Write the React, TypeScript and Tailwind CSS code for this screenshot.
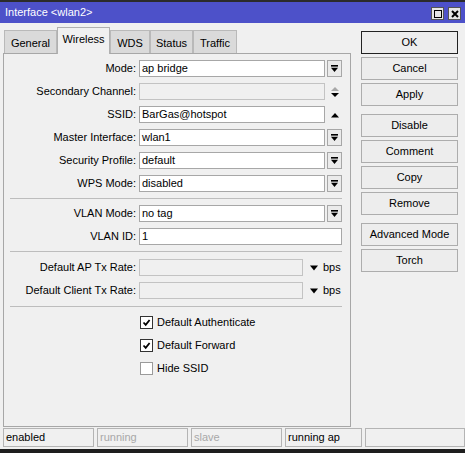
import React from "react";

const font = "font-['Liberation_Sans',Arial,sans-serif]";

function DropIcon() {
  return (
    <svg width="9" height="8" viewBox="0 0 9 8">
      <rect x="1" y="0" width="7" height="1.6" fill="#000" />
      <path d="M1 2.8 L8 2.8 L4.5 7 Z" fill="#000" />
    </svg>
  );
}

function DropButton() {
  return (
    <div className="ml-[2px] flex h-[17px] w-[15px] items-center justify-center border border-[#a7a7a7] bg-[#ebebeb]">
      <DropIcon />
    </div>
  );
}

function Field({
  value,
  width,
  disabled,
}: {
  value?: string;
  width: string;
  disabled?: boolean;
}) {
  return (
    <div
      className={`flex h-[17px] items-center border px-[2px] ${width} ${
        disabled ? "border-[#c3c3c3] bg-[#f0f0f0]" : "border-[#a7a7a7] bg-white"
      }`}
    >
      {value}
    </div>
  );
}

function Row({ label, children }: { label: string; children: React.ReactNode }) {
  return (
    <div className="flex h-[23px] items-center">
      <div className="w-[132px] shrink-0 text-right">{label}</div>
      <div className="ml-[3px] flex items-center">{children}</div>
    </div>
  );
}

function Separator({ top, bottom }: { top: string; bottom: string }) {
  return <div className={`ml-[6px] w-[332px] border-t border-[#bdbdbd] ${top} ${bottom}`} />;
}

function Check({ label, checked }: { label: string; checked: boolean }) {
  return (
    <div className="flex h-[23px] items-center pl-[136px]">
      <div
        className={`flex h-[13px] w-[13px] items-center justify-center border bg-white ${
          checked ? "border-[#333]" : "border-[#9a9a9a]"
        }`}
      >
        {checked && (
          <svg width="9" height="9" viewBox="0 0 9 9">
            <path d="M1.5 4.5 L3.7 6.8 L7.6 2" stroke="#000" strokeWidth="1.8" fill="none" />
          </svg>
        )}
      </div>
      <span className="ml-[4px]">{label}</span>
    </div>
  );
}

const tabs = [
  { name: "General", w: "w-[53px]" },
  { name: "Wireless", w: "w-[53px]", active: true },
  { name: "WDS", w: "w-[40px]" },
  { name: "Status", w: "w-[43px]" },
  { name: "Traffic", w: "w-[44px]" },
];

const buttons = [
  { name: "OK", gap: false, primary: true },
  { name: "Cancel" },
  { name: "Apply" },
  { name: "Disable", gap: true },
  { name: "Comment" },
  { name: "Copy" },
  { name: "Remove" },
  { name: "Advanced Mode", gap: true },
  { name: "Torch" },
];

const status = [
  { text: "enabled", w: "w-[91px]" },
  { text: "running", w: "w-[91px]", dim: true },
  { text: "slave", w: "w-[91px]", dim: true },
  { text: "running ap", w: "w-[77px]" },
  { text: "", w: "flex-1" },
];

export default function App() {
  return (
    <div
      className={`flex h-[453px] w-[465px] flex-col overflow-hidden bg-[#f0f0f0] text-[11px] text-black ${font}`}
    >
      <div className="h-[2px] bg-[#2b2b2b]" />
      <div className="flex h-[21px] items-center justify-between bg-[#4d51c9] pl-[5px] pr-[4px]">
        <span className="text-[11px] text-white">Interface &lt;wlan2&gt;</span>
        <div className="flex gap-[4px] pt-[2px]">
          <div className="flex h-[13px] w-[13px] items-center justify-center border border-[#555] bg-[#e6e6e6]">
            <div className="h-[8px] w-[8px] border-[1.5px] border-black" />
          </div>
          <div className="flex h-[13px] w-[13px] items-center justify-center border border-[#555] bg-[#e6e6e6]">
            <svg width="8" height="8" viewBox="0 0 8 8">
              <path d="M1 1 L7 7 M7 1 L1 7" stroke="#000" strokeWidth="2" />
            </svg>
          </div>
        </div>
      </div>

      <div className="flex h-[405px]">
        <div className="flex w-[351px] flex-col pl-[3px]">
          <div className="relative z-10 flex h-[30px] items-end pl-[1px]">
            {tabs.map((t) =>
              t.active ? (
                <div
                  key={t.name}
                  className={`${t.w} -mb-px flex h-[27px] items-center justify-center border border-b-0 border-[#b0b0b0] bg-[#f0f0f0] pb-[3px]`}
                >
                  {t.name}
                </div>
              ) : (
                <div
                  key={t.name}
                  className={`${t.w} flex h-[23px] items-center justify-center border border-b-0 border-[#b9b9b9] bg-[#dadada] pt-[2px]`}
                >
                  {t.name}
                </div>
              )
            )}
          </div>
          <div className="mb-[1px] flex-1 border border-[#a7a7a7] pt-[3px]">
            <Row label="Mode:">
              <Field value="ap bridge" width="w-[186px]" />
              <DropButton />
            </Row>
            <Row label="Secondary Channel:">
              <Field width="w-[186px]" disabled />
              <div className="ml-[2px] flex w-[15px] justify-center">
                <svg width="10" height="12" viewBox="0 0 10 12">
                  <path d="M1 5 L9 5 L5 1 Z" fill="#a8a8a8" />
                  <path d="M1 7 L9 7 L5 11 Z" fill="#000" />
                </svg>
              </div>
            </Row>
            <Row label="SSID:">
              <Field value="BarGas@hotspot" width="w-[186px]" />
              <div className="ml-[2px] flex w-[15px] justify-center">
                <svg width="10" height="6" viewBox="0 0 10 6">
                  <path d="M1 5.5 L9 5.5 L5 1 Z" fill="#000" />
                </svg>
              </div>
            </Row>
            <Row label="Master Interface:">
              <Field value="wlan1" width="w-[186px]" />
              <DropButton />
            </Row>
            <Row label="Security Profile:">
              <Field value="default" width="w-[186px]" />
              <DropButton />
            </Row>
            <Row label="WPS Mode:">
              <Field value="disabled" width="w-[186px]" />
              <DropButton />
            </Row>
            <Separator top="mt-[3px]" bottom="mb-[3px]" />
            <Row label="VLAN Mode:">
              <Field value="no tag" width="w-[186px]" />
              <DropButton />
            </Row>
            <Row label="VLAN ID:">
              <Field value="1" width="w-[203px]" />
            </Row>
            <Separator top="mt-[3px]" bottom="mb-[4px]" />
            <Row label="Default AP Tx Rate:">
              <Field width="w-[164px]" disabled />
              <svg className="ml-[6px]" width="10" height="6" viewBox="0 0 10 6">
                <path d="M1 0.5 L9 0.5 L5 5.5 Z" fill="#000" />
              </svg>
              <span className="ml-[4px]">bps</span>
            </Row>
            <Row label="Default Client Tx Rate:">
              <Field width="w-[164px]" disabled />
              <svg className="ml-[6px]" width="10" height="6" viewBox="0 0 10 6">
                <path d="M1 0.5 L9 0.5 L5 5.5 Z" fill="#000" />
              </svg>
              <span className="ml-[4px]">bps</span>
            </Row>
            <Separator top="mt-[4px]" bottom="mb-[4px]" />
            <Check label="Default Authenticate" checked />
            <Check label="Default Forward" checked />
            <Check label="Hide SSID" checked={false} />
          </div>
        </div>

        <div className="flex flex-col pl-[10px] pt-[8px]">
          {buttons.map((b) => (
            <div
              key={b.name}
              className={`flex h-[23px] w-[97px] items-center justify-center border bg-[#ededed] ${
                b.primary ? "border-[#222]" : "border-[#adadad]"
              } ${b.gap ? "mt-[8px]" : b.primary ? "" : "mt-[3px]"}`}
            >
              {b.name}
            </div>
          ))}
        </div>
      </div>

      <div className="flex h-[21px] gap-[3px] pl-[3px]">
        {status.map((s, i) => (
          <div
            key={i}
            className={`${s.w} flex h-[19px] items-center border border-[#b4b4b4] px-[2px] ${
              s.dim ? "text-[#a8a8a8]" : ""
            }`}
          >
            {s.text}
          </div>
        ))}
      </div>
      <div className="h-[4px] bg-[#1e1e1e]" />
    </div>
  );
}
